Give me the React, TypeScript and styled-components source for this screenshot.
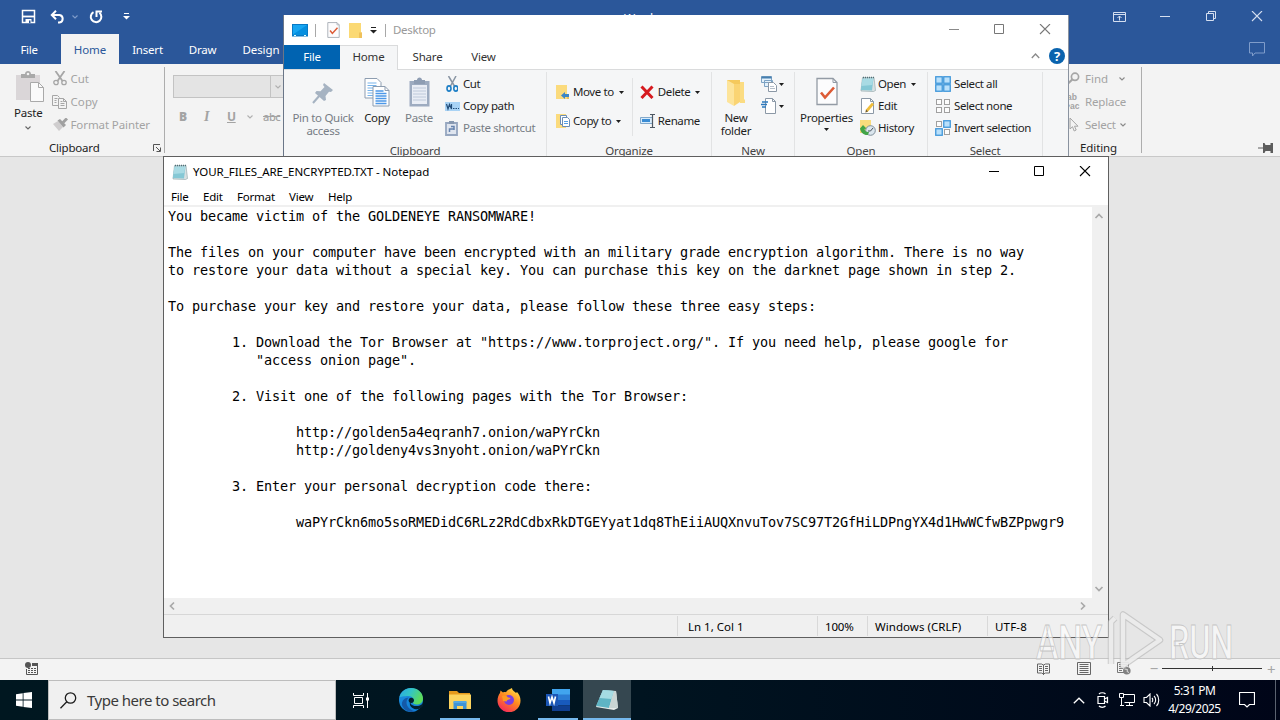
import React from 'react';
import styled, {createGlobalStyle} from 'styled-components';

const GlobalStyle = createGlobalStyle`
  * {
    box-sizing: border-box;
  }

  body {
    margin: 0;
    overflow: hidden;
    font-family: 'Noto Sans', 'Open Sans', sans-serif;
    font-size: 11.5px;
    letter-spacing: -0.4px;
    line-height: 16px;
    color: #1e1e1e;
  }

  svg {
    display: block;
    flex: none;
  }
`;

/* ---------- small glyphs ---------- */

const Caret = ({color = '#1e1e1e'}: {color?: string}) => (
    <svg width="5" height="3" viewBox="0 0 5 3"><path d="M0 0h5L2.5 3z" fill={color}/></svg>
);

const Chevron = ({color = '#8a8a8a', w = 6}: {color?: string; w?: number}) => (
    <svg width={w} height="4" viewBox="0 0 6 4"><path d="M.5.5 3 3 5.5.5" fill="none" stroke={color} strokeWidth="1.1"/></svg>
);

const ScrollArrow = ({turn = 0}: {turn?: number}) => (
    <svg width="10" height="10" viewBox="0 0 10 10">
        <path d="M1.5 7 5 3.5 8.5 7" fill="none" stroke="#a9a9a9" strokeWidth="1.7" transform={`rotate(${turn} 5 5)`}/>
    </svg>
);

const MinIcon = ({color}: {color: string}) => (
    <svg width="12" height="12" viewBox="0 0 12 12"><path d="M1 5.5h10" stroke={color}/></svg>
);
const MaxIcon = ({color}: {color: string}) => (
    <svg width="12" height="12" viewBox="0 0 12 12"><path d="M1.5.5h9v9h-9z" fill="none" stroke={color}/></svg>
);
const CloseIcon = ({color}: {color: string}) => (
    <svg width="12" height="12" viewBox="0 0 12 12"><path d="m1 0 10 10M11 0 1 10" stroke={color} strokeWidth="1.1"/></svg>
);
const RestoreIcon = () => (
    <svg width="12" height="12" viewBox="0 0 12 12">
        <path d="M1.5 2.500h7v7h-7zM3.5 2.500v-2h7v7h-2" fill="none" stroke="#d5dff0"/>
    </svg>
);

/* ---------- word icons ---------- */

const SaveIcon = () => (
    <svg width="15" height="15" viewBox="0 0 15 15">
        <path d="M1.500 1.500h12v12h-12z" fill="none" stroke="#fff" strokeWidth="1.500"/>
        <path d="M2 7.500h11" stroke="#fff" strokeWidth="1.800"/>
        <path d="M4.500 10h6v4h-6z" fill="#fff"/>
        <path d="M8 11.500h1.500V14H8z" fill="#2b579a"/>
    </svg>
);
const UndoIcon = () => (
    <svg width="15" height="14" viewBox="0 0 15 14">
        <path d="M2 5h7.5a3.8 3.8 0 0 1 0 7.500H8M6 .8 1.8 5 6 9.2" fill="none" stroke="#fff" strokeWidth="2"/>
    </svg>
);
const RedoIcon = () => (
    <svg width="14" height="14" viewBox="0 0 14 14">
        <path d="M4.500 2.200a5.300 5.300 0 1 0 6 .6M7.500 7V1.500H13" fill="none" stroke="#fff" strokeWidth="2"/>
    </svg>
);
const CustomizeIcon = ({color = '#fff'}: {color?: string}) => (
    <svg width="7" height="7" viewBox="0 0 7 7"><path d="M1 .5h5" stroke={color}/><path d="M0 3h7L3.5 6.5z" fill={color}/></svg>
);
const RibbonOptionsIcon = () => (
    <svg width="13" height="10" viewBox="0 0 13 10">
        <path d="M.5.5h12v9H.5zM.5 2.5h12M6.5 8.500V4M4.500 6l2-2 2 2" fill="none" stroke="#d5dff0"/>
    </svg>
);
const CommentIcon = () => (
    <svg width="17" height="15" viewBox="0 0 17 15">
        <path d="M.5.5h15v10.500H6l-2.500 3v-3h-3z" fill="none" stroke="#7f9cca"/>
    </svg>
);
const WordPasteIcon = () => (
    <svg width="29" height="31" viewBox="0 0 29 31">
        <path d="M0 4h24v25H0z" fill="#dad6d8"/>
        <path d="M5 3h4c0-4 6-4 6 0h4v4H5z" fill="#a9a9a9"/>
        <circle cx="12" cy="3" r="1.300" fill="#f3f3f3"/>
        <path d="M14.500 11.500h8l5 5v14h-13z" fill="#fafafa" stroke="#a9a9a9"/>
        <path d="M22.500 11.500v5h5" fill="none" stroke="#a9a9a9"/>
    </svg>
);
const WordCutIcon = () => (
    <svg width="16" height="15" viewBox="-2 0 16 15">
        <path d="M2.500 0 9.500 10M11.500 0l-7 10" stroke="#a6a6a6" strokeWidth="1.800"/>
        <circle cx="3" cy="11.500" r="2.200" fill="none" stroke="#a6a6a6" strokeWidth="1.300"/>
        <circle cx="11" cy="11.500" r="2.200" fill="none" stroke="#a6a6a6" strokeWidth="1.300"/>
    </svg>
);
const WordCopyIcon = () => (
    <svg width="17" height="14" viewBox="-1 0 17 14">
        <path d="M6 10.500H.5V.5h5l2 2M2.500 3.500h3M2.500 5.500h2M2.500 7.500h2" fill="none" stroke="#a6a6a6"/>
        <path d="M6.500 3.500h5l3 3v7h-8zM11.500 3.500v3h3M8.500 6.500h2M8.500 8.500h4M8.500 10.500h4" fill="#f3f3f3" stroke="#a6a6a6"/>
    </svg>
);
const PainterIcon = () => (
    <svg width="17" height="14" viewBox="-2 0 17 14">
        <path d="m0 6 5-3 5 6-4 4z" fill="#cfcdce"/>
        <path d="m4.500 2.500 2.500-1.500 6 6-2.500 2.500z" fill="#a0a0a0"/>
        <path d="m10 4.500 4-4" stroke="#a0a0a0" strokeWidth="3"/>
    </svg>
);
const LauncherIcon = () => (
    <svg width="8" height="8" viewBox="0 0 8 8">
        <path d="M.5 7V.5H7M3 3l4 4M7.500 3.500v4h-4" fill="none" stroke="#555"/>
    </svg>
);
const FindIcon = () => (
    <svg width="13" height="13" viewBox="0 0 13 13">
        <circle cx="8" cy="4.800" r="3.600" fill="none" stroke="#a6a6a6" strokeWidth="1.700"/>
        <path d="M5.300 7.500.5 12" stroke="#a6a6a6" strokeWidth="2.200"/>
    </svg>
);
const PointerIcon = () => (
    <svg width="12" height="15" viewBox="-2 0 12 15">
        <path d="M1 1v11l2.500-2.300L5.200 14l2-1-1.700-3.800H9z" fill="none" stroke="#a6a6a6"/>
    </svg>
);
const PinIcon = () => (
    <svg width="16" height="10" viewBox="0 0 16 10">
        <path d="M0 5h5" stroke="#5c5c5c"/>
        <path d="M5 0h1.500l1 2h5V0H15v10h-2.500V8h-5l-1 2H5z" fill="#5c5c5c"/>
    </svg>
);
const MacroIcon = () => (
    <svg width="13" height="13" viewBox="0 0 13 13">
        <path d="M7 1h6v3H7z" fill="#555"/><circle cx="3" cy="3" r="3" fill="#555"/>
        <path d="M3 6.500h8M3 8.500h8M3 10.500h8" stroke="#555"/>
        <path d="M5.500 6v5M8.500 6v5" stroke="#f3f3f3"/>
        <path d="M1.500 7v5.500h11V4" fill="none" stroke="#555"/>
    </svg>
);
const ReadIcon = () => (
    <svg width="13" height="12" viewBox="0 0 13 12">
        <path d="M.5 1h4l2 1 2-1h4v9h-4l-2 1-2-1h-4zM6.500 2v10M2 3.500h3M2 5.500h3M2 7.500h3M8 3.500h3M8 5.500h3M8 7.500h3" fill="none" stroke="#666"/>
    </svg>
);
const PrintViewIcon = () => (
    <svg width="14" height="13" viewBox="0 0 14 13">
        <path d="M.5.5h13v12H.5zM2.500 2.500h9M2.500 4.500h9M2.500 6.500h9M2.500 8.500h9M2.500 10.500h9" fill="none" stroke="#666"/>
    </svg>
);
const WebViewIcon = () => (
    <svg width="14" height="13" viewBox="0 0 14 13">
        <path d="M7 10.500H.5V.5h11v4M2 2.500h8M2 4.500h5M2 6.500h4M2 8.500h3" fill="none" stroke="#777"/>
        <circle cx="9.800" cy="8.800" r="3.800" fill="#808080"/>
        <path d="m7.500 7 3 .5-.5 2 2 1" fill="none" stroke="#ddd"/>
    </svg>
);

/* ---------- explorer icons ---------- */

const DesktopIcon = () => (
    <svg width="16" height="13" viewBox="0 0 16 13">
        <path d="M0 0h16v12.500H0z" fill="#0879c5"/><path d="M1 1h14v9.500H1z" fill="#17a6f2"/>
        <path d="M1 10.500 15 1v9.500z" fill="#058fe0"/><path d="M2 11.500h2M12 11.500h2" stroke="#dff"/>
    </svg>
);
const CheckDocIcon = ({w, h}: {w: number; h: number}) => (
    <svg width={w} height={h} viewBox="0 0 22 28">
        <path d="M1 1h16l4 4v22H1z" fill="#fcfcfd" stroke="#939ba5" strokeWidth="1.300"/>
        <path d="M17 1v4h4" fill="none" stroke="#939ba5"/>
        <path d="m5 15 4 5 9-10" fill="none" stroke="#dd5b36" strokeWidth="2.600"/>
    </svg>
);
const FolderIcon = () => (
    <svg width="13" height="16" viewBox="0 0 13 16">
        <path d="M0 1h12v9l1 1v5H0z" fill="#fbd974"/><path d="M10 10.500h3V16h-3z" fill="#efc15b"/>
    </svg>
);
const BigPinIcon = () => (
    <svg width="22" height="22" viewBox="0 0 22 22">
        <path d="m1 21 7-8" stroke="#a6b3c2" strokeWidth="2"/>
        <path d="m12 1 9 7-2 2-2-.3-3.500 4.300.5 4-2 1L3 11l1.500-2 4 .2L12.500 5 11 3z" fill="#a6b3c2"/>
    </svg>
);
const BigCopyIcon = () => (
    <svg width="26" height="30" viewBox="0 0 26 30">
        <path d="M1 1.500h12l4 4V21H1z" fill="#fff" stroke="#8d9db0"/>
        <path d="M3.500 6h9M3.500 8.500h9M3.500 11h9M3.500 13.500h9M3.500 16h9M3.500 18.500h9" stroke="#77b3ea"/>
        <path d="M9 9.500h12l4 4V29H9z" fill="#fff" stroke="#8d9db0"/>
        <path d="M21 9.500v4h4" fill="none" stroke="#8d9db0"/>
        <path d="M11.500 14h8M11.500 16.500h11M11.500 19h11M11.500 21.500h11M11.500 24h11M11.500 26.500h11" stroke="#4c98e8" strokeWidth="1.400"/>
    </svg>
);
const BigPasteIcon = () => (
    <svg width="21" height="30" viewBox="0 0 21 30">
        <path d="M.5 4h20v25.500H.5z" fill="#9dabc0"/><path d="M3 8h15v19H3z" fill="#e9edf5"/>
        <path d="M5 3h3c0-3.500 5-3.500 5 0h3v4H5z" fill="#8e9db3"/>
        <path d="M4 11h13M4 14h13M4 17h13M4 20h13M4 23h13" stroke="#bec9da"/>
    </svg>
);
const CutIcon = () => (
    <svg width="13" height="16" viewBox="-1 0 13 16">
        <path d="M2.500 0 9 11M10 0 4 11" stroke="#8995a3" strokeWidth="1.500"/>
        <ellipse cx="3" cy="12.500" rx="2" ry="2.600" fill="none" stroke="#1e7fc6" strokeWidth="1.600"/>
        <ellipse cx="9.800" cy="12.500" rx="2" ry="2.600" fill="none" stroke="#1e7fc6" strokeWidth="1.600"/>
    </svg>
);
const PathIcon = () => (
    <svg width="15" height="9" viewBox="0 0 15 9">
        <path d="M0 0h15v9H0z" fill="#a9d3f5"/><path d="m1.500 2 1.500 5L4.500 2.500l2 4.500V2M8 6.500h1.500M10.500 6.500H12M13 6.500h1" fill="none" stroke="#234d79" strokeWidth="1.200"/>
    </svg>
);
const PasteShortcutIcon = () => (
    <svg width="13" height="15" viewBox="0 0 13 15">
        <path d="M1 2h11v12H1z" fill="#dfe5ef" stroke="#96a6bf" strokeWidth="1.800"/><path d="M4 0h5v3H4z" fill="#8798b0"/>
        <path d="M4.500 11V8h4M6 5.500h3V9" fill="none" stroke="#6683ae" strokeWidth="1.500"/>
    </svg>
);
const MoveIcon = () => (
    <svg width="13" height="16" viewBox="0 0 13 16">
        <path d="M0 1h11v9l2 1v4H0z" fill="#fbdb7d"/><path d="M11 10h2v5h-2z" fill="#ecc060"/>
        <path d="M5 11.500 9 8v2h4v3H9v2z" fill="#3d86c6"/>
    </svg>
);
const CopyToIcon = () => (
    <svg width="15" height="16" viewBox="0 0 15 16">
        <path d="M0 1h10v14H0z" fill="#fbdb7d"/>
        <path d="M4.500 2.500h6v9h-6z" fill="#fff" stroke="#6b8db5"/>
        <path d="M6.500 4.500h5l2 2v7h-7z" fill="#fff" stroke="#6b8db5"/><path d="M8 8.500h4M8 10.500h4" stroke="#57a0e4"/>
    </svg>
);
const DeleteIcon = () => (
    <svg width="14" height="14" viewBox="0 0 14 14"><path d="m1.500 1.500 11 11.500M12.500 1.500l-11 11.500" stroke="#d61a1f" strokeWidth="3"/></svg>
);
const RenameIcon = () => (
    <svg width="16" height="14" viewBox="0 0 16 14">
        <path d="M.5 3.500h12v6H.5z" fill="#d9ecfb" stroke="#83a9cb"/><path d="M2 5h8v3H2z" fill="#3a8cd4"/>
        <path d="M10 .5h5M10 13.500h5M12.500.5v13" stroke="#4d5762" strokeWidth="1.200"/>
    </svg>
);
const NewFolderIcon = () => (
    <svg width="20" height="26" viewBox="0 0 20 26">
        <path d="M1 0h13v22H1z" fill="#f5c95c"/><path d="M14 2h4v17l1 1v3h-5z" fill="#fbdc82"/>
        <path d="m1 0 7 4v22l-7-4z" fill="#fde49a"/><path d="M8 4h6v18l-6 4z" fill="#fad473"/>
    </svg>
);
const NewItemIcon = () => (
    <svg width="16" height="16" viewBox="0 0 16 16">
        <path d="M.5.500h10v6H.5zM3.500 4.500h8v6h-8z" fill="#e4f1fb" stroke="#7da3c4"/>
        <path d="M.5 1.500h10" stroke="#477faf" strokeWidth="2"/>
        <path d="M7.500 6.500h5l3 3v6h-8z" fill="#fff" stroke="#8b98a6"/><path d="M9 10.500h4M9 12.500h5" stroke="#b5bfca"/>
    </svg>
);
const EasyAccessIcon = () => (
    <svg width="16" height="16" viewBox="0 0 16 16">
        <path d="M4.500.500h7l3 3v12h-10z" fill="#fff" stroke="#8b98a6"/><path d="M11.500.500v3h3" fill="none" stroke="#8b98a6"/>
        <path d="M1 4h6M0 6.500h6M1 9h4" stroke="#2d79bd" strokeWidth="1.500"/>
    </svg>
);
const NotepadIcon = () => (
    <svg width="16" height="16" viewBox="0 0 16 16">
        <path d="M2.500 1.500h11.500l1.500 13-2 1-12.500-.5z" fill="#d8e1e2" stroke="#8ba1a5" strokeWidth=".6"/>
        <path d="M2.500 2.500h11l-1.500 12L.8 14z" fill="#85c8d5"/><path d="m2.500 3 10.800-.5-1 6.500-11 1z" fill="#a9dbe4"/>
        <path d="M3 1.500h11" stroke="#4f6f77" strokeWidth="1.500" strokeDasharray="1 1"/>
    </svg>
);
const EditIcon = () => (
    <svg width="14" height="16" viewBox="-1 0 14 16">
        <path d="M.5.500h9l3 3v12H.5z" fill="#fff" stroke="#8b98a6"/><path d="M9.500.500v3h3" fill="none" stroke="#8b98a6"/>
        <path d="m5 11.500 6-7 2 2-6 7-2.500 1z" fill="#efbe3c"/><path d="m4.500 14.500.5-3 2 2z" fill="#6c5a3a"/>
    </svg>
);
const HistoryIcon = () => (
    <svg width="16" height="16" viewBox="0 0 16 16">
        <path d="M0 0h11v13H0z" fill="#f9dc7c"/><circle cx="10.500" cy="10.500" r="4.800" fill="#dbe6ee" stroke="#7f8e99"/>
        <path d="M10.500 11 13 8M10.500 11H8" stroke="#47525c"/>
        <path d="M0 8.500C1 13 4 15.500 8 15l1-3c-2.500.5-4-1-4.500-3l2-.5L3 5z" fill="#42a447"/>
    </svg>
);

const SelectIcon = ({on}: {on: boolean[]}) => (
    <svg width="16" height="16" viewBox="0 0 16 16">
        {on.map((active, i) => {
            const x = (i % 2) * 8;
            const y = Math.floor(i / 2) * 8;
            return active
                ? <rect key={i} x={x + 0.75} y={y + 0.75} width="6.500" height="6.500" fill="#b9e0fb" stroke="#3f97da" strokeWidth="1.300"/>
                : <rect key={i} x={x + 1.5} y={y + 1.5} width="5" height="5" fill="#fdfdfd" stroke="#a0a0a0"/>;
        })}
    </svg>
);

/* ---------- taskbar icons ---------- */

const StartIcon = () => (
    <svg width="16" height="16" viewBox="0 0 16 16" fill="#fff">
        <path d="m0 2.200 6.700-1v6.400H0zM7.500 1.100 16 0v7.600H7.500zM0 8.400h6.700v6.400l-6.700-1zM7.500 8.400H16V16l-8.500-1.100z"/>
    </svg>
);
const SearchIcon = () => (
    <svg width="17" height="17" viewBox="0 0 17 17">
        <circle cx="10.500" cy="6" r="5.200" fill="none" stroke="#1c1c1c" strokeWidth="1.300"/>
        <path d="M6.800 9.800.5 16.200" stroke="#1c1c1c" strokeWidth="1.300"/>
    </svg>
);
const TaskViewIcon = () => (
    <svg width="17" height="15" viewBox="0 0 17 15">
        <path d="M.5 0v2.500h10V0M.5 15v-2.500h10V15M1.500 4.500h8v6h-8zM14.500 0v15" fill="none" stroke="#fff"/>
        <path d="M13 4.500h3v3h-3z" fill="#fff"/>
    </svg>
);
const EdgeIcon = () => (
    <svg width="24" height="24" viewBox="0 0 24 24">
        <defs>
            <linearGradient id="edgeTop" x1="0" y1="0" x2="1" y2=".4">
                <stop offset="0" stopColor="#2aa7e6"/><stop offset=".5" stopColor="#33c5c5"/><stop offset="1" stopColor="#5ddc5a"/>
            </linearGradient>
            <linearGradient id="edgeBase" x1="0" y1="0" x2=".5" y2="1">
                <stop offset="0" stopColor="#1f8fe0"/><stop offset="1" stopColor="#1180d8"/>
            </linearGradient>
        </defs>
        <circle cx="12" cy="12" r="12" fill="url(#edgeBase)"/>
        <path d="M.3 9.500C1.500 4 6.300 0 12 0c7 0 12 5 12 10.500 0 4-3 6-6.200 6-3 0-4.300-1.200-3.800-2.200 1.500-2.500 0-6.300-4.500-6.300C5 8 1 9 .3 9.500z" fill="url(#edgeTop)"/>
        <path d="M8.500 11c-3 5 1 11 7.500 12.200C12 25 6 23.500 3.500 18.500 1.500 14 5 9.500 10 9.500c-.8.3-1.200.9-1.500 1.500z" fill="#1459a8"/>
        <path d="M12 13c-1.600 2.500.8 5.200 5.500 5 2.300 0 4.500-1 6.500-2.600v2.600c-1.500 1.800-4.500 3.500-7 3.200-4.500-.4-7.300-4-5.800-7.700z" fill="#03202f"/>
        <circle cx="12.300" cy="12.300" r="2.600" fill="#03202f"/>
    </svg>
);
const ExplorerIcon = () => (
    <svg width="22" height="18" viewBox="0 0 22 18">
        <path d="M0 0h8l2 2h11v5H0z" fill="#e59a1c"/><path d="M0 3.500h22V18H0z" fill="#fcd45e"/>
        <path d="M4.500 18v-7h13v7h-3.500v-3H8v3z" fill="#3f94d6"/><path d="M4.500 10h13v2h-13z" fill="#54a8e2"/>
    </svg>
);
const FirefoxIcon = () => (
    <svg width="24" height="24" viewBox="0 0 24 24">
        <defs>
            <linearGradient id="fox" x1=".8" y1="0" x2=".2" y2="1">
                <stop offset="0" stopColor="#ffe14a"/><stop offset=".45" stopColor="#ff8a1f"/><stop offset="1" stopColor="#f5215f"/>
            </linearGradient>
        </defs>
        <path d="M15 0c0 2.500 3 3.500 4 5l1-1c2 2 3.500 5 3.500 8.500A11.500 11.500 0 0 1 .5 13C.5 9.500 1.500 7 3 5l.5-2.500L6 4.500c1-.5 2-.5 3-.3C10 2 13 1 15 0z" fill="url(#fox)"/>
        <circle cx="12" cy="12" r="5" fill="#7a3fe0"/>
        <path d="M5 8c3-1 5 0 6 1.500 2 0 3 .5 2 1.500-2 1-3 1-3.500 2.500L6 13z" fill="#ff9a22"/>
    </svg>
);
const WordIcon = () => (
    <svg width="24" height="22" viewBox="0 0 24 22">
        <path d="M6 0h18v6H6z" fill="#41a5ee"/><path d="M6 5.500h18V11H6z" fill="#2b7cd3"/>
        <path d="M6 11h18v5.500H6z" fill="#185abd"/><path d="M6 16.500h18V22H6z" fill="#103f91"/>
        <path d="M0 5h12v12H0z" fill="#1b56b5"/>
        <path d="M2.500 7.500 4 14l2-6 2 6 1.500-6.500" fill="none" stroke="#fff" strokeWidth="1.600"/>
    </svg>
);
const TaskNotepadIcon = () => (
    <svg width="24" height="22" viewBox="0 0 24 22">
        <path d="m8 1 13 1 2 17-4 2L1 18z" fill="#e6ecea"/><path d="m8 1 11 1-5 17L1 17z" fill="#5fb4c4"/>
        <path d="m8 1 11 1-2.500 8L4.500 9z" fill="#a5dbe3"/><path d="m19 2 2 0 2 17-9 0z" fill="#c9d5d4"/>
    </svg>
);
const TrayChevron = () => (
    <svg width="12" height="7" viewBox="0 0 12 7"><path d="m.8 6.200 5.200-5 5.200 5" fill="none" stroke="#fff" strokeWidth="1.300"/></svg>
);
const MeetIcon = () => (
    <svg width="12" height="16" viewBox="0 0 12 16">
        <path d="M1 4.500h6.500v7H1zM7.500 7l3-1.500v5l-3-1.500M2 2c1.500-1.700 5-1.700 6.500 0M2 14c1.500 1.700 5 1.700 6.500 0" fill="none" stroke="#fff" strokeWidth="1.200"/>
    </svg>
);
const NetworkIcon = () => (
    <svg width="16" height="14" viewBox="0 0 16 14">
        <path d="M5 1.500h10.500v8H5.500M10.500 9.500v3M7 12.500h7M.5.500h4v4h-4zM2.500 4.500v8M1 12.500h4" fill="none" stroke="#fff"/>
    </svg>
);
const VolumeIcon = () => (
    <svg width="17" height="14" viewBox="0 0 17 14">
        <path d="M1 4.500h2.500L7 1v12L3.500 9.500H1zM9 5c1 1 1 3 0 4M11 3c2.200 2 2.200 6 0 8M13.500 1c3 3.200 3 8.800 0 12" fill="none" stroke="#fff" strokeWidth="1.100"/>
    </svg>
);
const ActionIcon = () => (
    <svg width="16" height="16" viewBox="0 0 16 16"><path d="M.500.500h15v12h-5L8 15l-2.500-2.500h-5z" fill="none" stroke="#fff" strokeWidth="1.200"/></svg>
);

/* ---------- shared pieces ---------- */

const Txt = styled.span<{$ls?: number; $size?: number; $color?: string; $ml?: number; $mt?: number}>`
  flex: none;
  white-space: nowrap;
  margin-left: ${p => p.$ml ?? 0}px;
  ${p => p.$mt && `margin-top: ${p.$mt}px;`}
  ${p => p.$size && `font-size: ${p.$size}px;`}
  ${p => p.$ls !== undefined && `letter-spacing: ${p.$ls}px;`}
  ${p => p.$color && `color: ${p.$color};`}
`;

const Spacer = styled.div`
  flex: 1;
`;

const Controls = styled.div`
  display: flex;
  margin-left: auto;
`;

const Control = styled.div<{$w?: number}>`
  width: ${p => p.$w ?? 45}px;
  height: 30px;
  display: flex;
  align-items: center;
  justify-content: center;
`;

/* ---------- word ---------- */

const Screen = styled.div`
  position: relative;
  width: 1280px;
  height: 720px;
  overflow: hidden;
  display: flex;
  flex-direction: column;
  background: #e6e6e6;
`;

const WordTitle = styled.div`
  height: 33px;
  display: flex;
  align-items: center;
  padding-left: 21px;
  background: #2b579a;
`;

const WordTabs = styled.div`
  height: 31px;
  display: flex;
  padding-top: 1px;
  color: #fff;
  background: #2b579a;
`;

const WordTab = styled.div<{$w: number; $active?: boolean}>`
  width: ${p => p.$w}px;
  display: flex;
  align-items: center;
  justify-content: center;
  padding-top: 1px;
  color: ${p => p.$active ? '#2b579a' : '#fff'};
  background: ${p => p.$active ? '#f3f3f3' : 'transparent'};
`;

const WordRibbon = styled.div`
  height: 93px;
  display: flex;
  padding-top: 3px;
  background: #f3f3f3;
  border-bottom: 1px solid #c8c8c8;
  color: #a3a3a3;
`;

const WordGroup = styled.div<{$w: number; $line?: boolean}>`
  width: ${p => p.$w}px;
  height: 86px;
  display: flex;
  flex-direction: column;
  border-right: ${p => p.$line ? '1px solid #adadad' : 'none'};
`;

const WordGroupBody = styled.div`
  height: 70px;
  display: flex;
`;

const WordGroupLabel = styled.div<{$pl: number}>`
  display: flex;
  align-items: center;
  padding-left: ${p => p.$pl}px;
  padding-top: 4px;
  color: #222;
`;

const PasteColumn = styled.div`
  width: 52px;
  display: flex;
  flex-direction: column;
  align-items: center;
  padding: 4px 0 0 6px;
  color: #222;

  svg:first-child {
    margin-left: 4px;
  }

  span {
    margin-top: 3px;
  }

  svg:last-child {
    margin-top: 5px;
  }
`;

const WordRows = styled.div`
  display: flex;
  flex-direction: column;
`;

const WordRow = styled.div<{$icon?: number}>`
  height: 23px;
  display: grid;
  grid-template-columns: ${p => p.$icon ?? 20}px auto 14px;
  align-items: center;
  justify-content: start;
  white-space: nowrap;
`;

const FontBox = styled.div`
  width: 112px;
  height: 23px;
  margin: 8px 0 0 8px;
  display: flex;
  align-items: center;
  justify-content: flex-end;
  background: #e4e4e4;
  border: 1px solid #c3c3c3;
`;

const FontArrow = styled.div`
  width: 14px;
  height: 21px;
  display: flex;
  align-items: center;
  justify-content: center;
  border-left: 1px solid #c3c3c3;
`;

const FontButtons = styled.div`
  display: flex;
  align-items: center;
  height: 20px;
  margin-top: 9px;
  padding-left: 14px;
  font-size: 12px;
  font-weight: 700;

  i {
    width: 23px;
    font-family: 'Liberation Serif', serif;
    font-size: 14px;
  }

  b {
    width: 25px;
  }

  u {
    width: 20px;
  }

  s {
    margin-left: 10px;
    font-weight: 500;
    font-size: 11px;
  }
`;

const ReplaceGlyph = styled.div`
  display: grid;
  grid-template-rows: 9px 9px;
  font-family: 'Liberation Sans', sans-serif;
  font-size: 8.5px;
  font-weight: 700;
  letter-spacing: 0;
  line-height: 9px;
`;

const WordStatus = styled.div`
  height: 22px;
  display: flex;
  align-items: center;
  padding: 0 4px 2px 25px;
  background: #f3f3f3;
  border-top: 1px solid #c6c6c6;
`;

const ZoomTrack = styled.div`
  width: 100px;
  height: 1px;
  margin: 0 4px 0 4px;
  display: flex;
  align-items: center;
  justify-content: center;
  background: #333;

  &::after {
    content: '';
    width: 1px;
    height: 5px;
    background: #333;
  }
`;

const ZoomSign = styled.span`
  width: 10px;
  color: #a6a6a6;
  font-size: 15px;
  text-align: center;
`;

/* ---------- explorer ---------- */

const ExplorerWindow = styled.div`
  position: absolute;
  left: 284px;
  top: 15px;
  width: 784px;
  height: 142px;
  overflow: hidden;
  background: #fff;
  box-shadow: -1px 0 0 #6a7688, 1px 0 0 #8a93a0;
`;

const ExplorerTitle = styled.div`
  height: 30px;
  display: flex;
  align-items: center;
  padding-left: 8px;
  color: #999;
`;

const TitleLine = styled.div<{$ml: number}>`
  width: 1px;
  height: 13px;
  margin-left: ${p => p.$ml}px;
  background: #a8a8a8;
`;

const ExplorerTabs = styled.div`
  height: 24px;
  display: flex;
  align-items: flex-start;
`;

const ExplorerTab = styled.div<{$w: number; $kind?: 'file' | 'active'}>`
  width: ${p => p.$w}px;
  height: ${p => p.$kind === 'active' ? 25 : 24}px;
  flex: none;
  padding-top: ${p => p.$kind === 'active' ? 3 : 4}px;
  text-align: center;
  letter-spacing: -0.2px;
  color: ${p => p.$kind === 'file' ? '#fff' : '#333'};
  background: ${p => p.$kind === 'file' ? '#0063b1' : p.$kind === 'active' ? '#f5f6f7' : 'transparent'};
  border: ${p => p.$kind === 'active' ? '1px solid #dadbdc' : 'none'};
  border-bottom: none;
  border-left: none;
`;

const TabTools = styled.div`
  height: 22px;
  display: flex;
  align-items: center;
`;

const HelpBadge = styled.div`
  width: 16px;
  height: 16px;
  margin: 0 3px 0 9px;
  border-radius: 50%;
  background: #0a63ae;
  color: #fff;
  font-size: 13px;
  font-weight: 700;
  text-align: center;
`;

const ExplorerRibbon = styled.div`
  height: 88px;
  display: flex;
  background: #f5f6f7;
  border-top: 1px solid #dadbdc;
`;

const ExplorerGroup = styled.div<{$w: number}>`
  width: ${p => p.$w}px;
  margin-top: 2px;
  display: flex;
  flex-direction: column;
  border-right: 1px solid #e2e3e4;
`;

const GroupBody = styled.div`
  height: 70px;
  flex: none;
  display: flex;
`;

const GroupLabel = styled.div`
  padding-top: 1px;
  text-align: center;
  letter-spacing: -0.2px;
  color: #444;
`;

const BigButton = styled.div<{$w: number; $pt: number; $gap?: number; $dim?: boolean}>`
  width: ${p => p.$w}px;
  flex: none;
  display: flex;
  flex-direction: column;
  align-items: center;
  padding-top: ${p => p.$pt}px;
  line-height: 13px;
  letter-spacing: -0.3px;
  text-align: center;
  color: ${p => p.$dim ? '#777d85' : '#1e1e1e'};

  span {
    margin-top: ${p => p.$gap ?? 4}px;
  }

  span + svg {
    margin-top: 4px;
  }
`;

const ToolColumn = styled.div<{$ml: number; $pt?: number; $gap?: number}>`
  flex: none;
  display: flex;
  flex-direction: column;
  gap: ${p => p.$gap ?? 0}px;
  margin-left: ${p => p.$ml}px;
  padding-top: ${p => p.$pt ?? 1}px;
`;

const Tool = styled.div<{$icon?: number; $dim?: boolean}>`
  height: 22px;
  display: grid;
  grid-template-columns: ${p => p.$icon ?? 18}px auto auto;
  align-items: center;
  justify-content: start;
  white-space: nowrap;
  color: ${p => p.$dim ? '#777d85' : '#1e1e1e'};

  svg:last-child:not(:first-child) {
    margin-left: 5px;
  }
`;

const InnerLine = styled.div`
  width: 1px;
  height: 58px;
  margin: 6px 0 0 8px;
  background: #e2e3e4;
`;

/* ---------- notepad ---------- */

const NotepadWindow = styled.div`
  position: absolute;
  left: 163px;
  top: 156px;
  width: 946px;
  height: 482px;
  display: flex;
  flex-direction: column;
  background: #fff;
  border: 1px solid #5f5f5f;
  color: #000;
`;

const NotepadTitle = styled.div`
  height: 30px;
  display: flex;
  align-items: center;
  gap: 5px;
  padding: 0 0 1px 8px;
`;

const NotepadMenu = styled.div`
  height: 20px;
  display: flex;
  align-items: center;
  padding: 2px 0 0 7px;
  border-bottom: 2px solid #f0f0f0;
  letter-spacing: -0.2px;
`;

const MenuItem = styled.span<{$w: number}>`
  width: ${p => p.$w}px;
`;

const Editor = styled.div`
  height: 391px;
  display: flex;
`;

const NoteText = styled.pre`
  flex: 1;
  margin: 0;
  padding: 0 0 0 4px;
  font-family: 'DejaVu Sans Mono', monospace;
  font-size: 13.5px;
  letter-spacing: -0.127px;
  line-height: 18px;
`;

const ScrollBar = styled.div<{$row?: boolean}>`
  display: flex;
  flex-direction: ${p => p.$row ? 'row' : 'column'};
  align-items: center;
  justify-content: space-between;
  background: #f0f0f0;
  ${p => p.$row
    ? 'height: 16px; padding: 0 20px 1px 3px;'
    : 'width: 16px; padding: 4px 2px 4px 0;'}
`;

const NotepadStatus = styled.div`
  height: 23px;
  display: flex;
  align-items: center;
  justify-content: flex-end;
  background: #f0f0f0;
  border-top: 1px solid #d7d7d7;
`;

const StatusCell = styled.div<{$w: number; $pl: number}>`
  width: ${p => p.$w}px;
  height: 20px;
  padding: 3px 0 0 ${p => p.$pl}px;
  border-left: 1px solid #d9d9d9;
  letter-spacing: -0.2px;
`;

/* ---------- taskbar ---------- */

const Taskbar = styled.div`
  height: 40px;
  display: flex;
  align-items: center;
  color: #fff;
  background: linear-gradient(90deg, #001720 0%, #001420 50%, #000518 100%);
`;

const StartButton = styled.div`
  width: 48px;
  display: flex;
  justify-content: center;
`;

const SearchBox = styled.div`
  width: 288px;
  height: 40px;
  display: flex;
  align-items: center;
  gap: 10px;
  padding-left: 11px;
  background: #f0f0f0;
  border: 1px solid #bdbdbd;
  color: #3a3a3a;
`;

const TaskButton = styled.div<{$w?: number; $line?: number; $active?: boolean}>`
  width: ${p => p.$w ?? 49}px;
  height: 40px;
  display: flex;
  align-items: center;
  justify-content: center;
  background: linear-gradient(#76b9ed, #76b9ed) center bottom / ${p => p.$line ?? 0}px 2px no-repeat;
  background-color: ${p => p.$active ? '#354750' : 'transparent'};
`;

const Tray = styled.div`
  margin-left: auto;
  display: flex;
  align-items: center;
`;

const TrayItem = styled.div<{$w?: number}>`
  width: ${p => p.$w ?? 24}px;
  display: flex;
  justify-content: center;
`;

const Clock = styled.div`
  width: 63px;
  text-align: center;
  font-size: 12px;
  line-height: 18px;
  letter-spacing: -0.5px;
`;

const PeekLine = styled.div`
  width: 1px;
  height: 40px;
  margin: 0 4px 0 7px;
  background: #5b6270;
`;

const Watermark = styled.svg`
  position: absolute;
  left: 1030px;
  top: 604px;
  overflow: visible;
`;

const note = `You became victim of the GOLDENEYE RANSOMWARE!

The files on your computer have been encrypted with an military grade encryption algorithm. There is no way
to restore your data without a special key. You can purchase this key on the darknet page shown in step 2.

To purchase your key and restore your data, please follow these three easy steps:

        1. Download the Tor Browser at "https://www.torproject.org/". If you need help, please google for
           "access onion page".

        2. Visit one of the following pages with the Tor Browser:

                http://golden5a4eqranh7.onion/waPYrCkn
                http://goldeny4vs3nyoht.onion/waPYrCkn

        3. Enter your personal decryption code there:

                waPYrCkn6mo5soRMEDidC6RLz2RdCdbxRkDTGEYyat1dq8ThEiiAUQXnvuTov7SC97T2GfHiLDPngYX4d1HwWCfwBZPpwgr9`;

const Word = () => (
    <>
        <WordTitle>
            <SaveIcon/>
            <Txt $ml={14}><UndoIcon/></Txt>
            <Txt $ml={7}><Chevron color="#7f9cca"/></Txt>
            <Txt $ml={11}><RedoIcon/></Txt>
            <Txt $ml={20}><CustomizeIcon/></Txt>
            <Txt $ml={494} $mt={5} $size={12} $color="#fff">Word</Txt>
            <Controls>
                <Control $w={46}><RibbonOptionsIcon/></Control>
                <Control $w={46}><MinIcon color="#d5dff0"/></Control>
                <Control $w={46}><RestoreIcon/></Control>
                <Control $w={46}><CloseIcon color="#d5dff0"/></Control>
            </Controls>
        </WordTitle>
        <WordTabs>
            <WordTab $w={61}><Txt $ls={-0.3} $ml={-3}>File</Txt></WordTab>
            <WordTab $w={58} $active><Txt $ls={0}>Home</Txt></WordTab>
            <WordTab $w={57}><Txt $ls={-0.2}>Insert</Txt></WordTab>
            <WordTab $w={53}><Txt $ls={-0.2}>Draw</Txt></WordTab>
            <WordTab $w={64}><Txt $ls={-0.1}>Design</Txt></WordTab>
            <Spacer/>
            <Control $w={46}><CommentIcon/></Control>
        </WordTabs>
        <WordRibbon>
            <WordGroup $w={165} $line>
                <WordGroupBody>
                    <PasteColumn>
                        <WordPasteIcon/>
                        <Txt $ls={-0.2}>Paste</Txt>
                        <Chevron color="#666"/>
                    </PasteColumn>
                    <WordRows>
                        <WordRow><WordCutIcon/><Txt $ls={0}>Cut</Txt></WordRow>
                        <WordRow><WordCopyIcon/><Txt $ls={0.1}>Copy</Txt></WordRow>
                        <WordRow><PainterIcon/><Txt $ls={-0.1}>Format Painter</Txt></WordRow>
                    </WordRows>
                </WordGroupBody>
                <WordGroupLabel $pl={49}>
                    <Txt $ls={-0.2}>Clipboard</Txt>
                    <Txt $ml={53}><LauncherIcon/></Txt>
                </WordGroupLabel>
            </WordGroup>
            <WordGroup $w={120}>
                <FontBox><FontArrow><Chevron color="#b0b0b0"/></FontArrow></FontBox>
                <FontButtons>
                    <b>B</b><i>I</i><u>U</u><Chevron color="#b0b0b0"/><s>abc</s>
                </FontButtons>
            </WordGroup>
            <Spacer/>
            <WordGroup $w={75} $line>
                <WordGroupBody>
                    <WordRows>
                        <WordRow $icon={18}><FindIcon/><Txt $ls={0}>Find</Txt><Txt $ml={11}><Chevron/></Txt></WordRow>
                        <WordRow $icon={18}><ReplaceGlyph><span>ab</span><span>•ac</span></ReplaceGlyph><Txt $ls={-0.15}>Replace</Txt></WordRow>
                        <WordRow $icon={18}><PointerIcon/><Txt $ls={-0.2}>Select</Txt><Txt $ml={4}><Chevron/></Txt></WordRow>
                    </WordRows>
                </WordGroupBody>
                <WordGroupLabel $pl={13}><Txt $ls={-0.1}>Editing</Txt></WordGroupLabel>
            </WordGroup>
            <WordGroup $w={138}>
                <WordGroupBody/>
                <WordGroupLabel $pl={116}><Txt $mt={4}><PinIcon/></Txt></WordGroupLabel>
            </WordGroup>
        </WordRibbon>
        <Spacer/>
        <WordStatus>
            <MacroIcon/>
            <Spacer/>
            <ReadIcon/>
            <Txt $ml={27}><PrintViewIcon/></Txt>
            <Txt $ml={26}><WebViewIcon/></Txt>
            <Txt $ml={19}><ZoomSign>−</ZoomSign></Txt>
            <ZoomTrack/>
            <ZoomSign>+</ZoomSign>
        </WordStatus>
    </>
);

const Explorer = () => (
    <ExplorerWindow>
        <ExplorerTitle>
            <DesktopIcon/>
            <TitleLine $ml={7}/>
            <Txt $ml={11}><CheckDocIcon w={13} h={16}/></Txt>
            <Txt $ml={9}><FolderIcon/></Txt>
            <Txt $ml={8}><CustomizeIcon color="#222"/></Txt>
            <TitleLine $ml={8}/>
            <Txt $ml={7} $ls={-0.3}>Desktop</Txt>
            <Controls>
                <Control><MinIcon color="#8a8a8a"/></Control>
                <Control><MaxIcon color="#777"/></Control>
                <Control $w={47}><CloseIcon color="#777"/></Control>
            </Controls>
        </ExplorerTitle>
        <ExplorerTabs>
            <ExplorerTab $w={56} $kind="file">File</ExplorerTab>
            <ExplorerTab $w={58} $kind="active">Home</ExplorerTab>
            <ExplorerTab $w={59}>Share</ExplorerTab>
            <ExplorerTab $w={53}>View</ExplorerTab>
            <Spacer/>
            <TabTools>
                <svg width="9" height="6" viewBox="0 0 9 6"><path d="m.8 5 3.700-4 3.700 4" fill="none" stroke="#8a8a8a" strokeWidth="1.300"/></svg>
                <HelpBadge>?</HelpBadge>
            </TabTools>
        </ExplorerTabs>
        <ExplorerRibbon>
            <ExplorerGroup $w={263}>
                <GroupBody>
                    <BigButton $w={78} $pt={10} $gap={7} $dim><BigPinIcon/><span>Pin to Quick<br/>access</span></BigButton>
                    <BigButton $w={30} $pt={5}><BigCopyIcon/><span>Copy</span></BigButton>
                    <BigButton $w={54} $pt={5} $dim><BigPasteIcon/><span>Paste</span></BigButton>
                    <ToolColumn $ml={-1}>
                        <Tool><CutIcon/>Cut</Tool>
                        <Tool><PathIcon/>Copy path</Tool>
                        <Tool $dim><PasteShortcutIcon/>Paste shortcut</Tool>
                    </ToolColumn>
                </GroupBody>
                <GroupLabel>Clipboard</GroupLabel>
            </ExplorerGroup>
            <ExplorerGroup $w={165}>
                <GroupBody>
                    <ToolColumn $ml={9} $pt={9} $gap={7}>
                        <Tool $icon={17}><MoveIcon/>Move to<Caret/></Tool>
                        <Tool $icon={17}><CopyToIcon/>Copy to<Caret/></Tool>
                    </ToolColumn>
                    <InnerLine/>
                    <ToolColumn $ml={7} $pt={9} $gap={7}>
                        <Tool><DeleteIcon/>Delete<Caret/></Tool>
                        <Tool><RenameIcon/>Rename</Tool>
                    </ToolColumn>
                </GroupBody>
                <GroupLabel>Organize</GroupLabel>
            </ExplorerGroup>
            <ExplorerGroup $w={83}>
                <GroupBody>
                    <BigButton $w={48} $pt={8} $gap={5}><NewFolderIcon/><span>New<br/>folder</span></BigButton>
                    <ToolColumn $ml={1}>
                        <Tool $icon={13}><NewItemIcon/><Caret/></Tool>
                        <Tool $icon={13}><EasyAccessIcon/><Caret/></Tool>
                    </ToolColumn>
                </GroupBody>
                <GroupLabel>New</GroupLabel>
            </ExplorerGroup>
            <ExplorerGroup $w={133}>
                <GroupBody>
                    <BigButton $w={63} $pt={5} $gap={5}>
                        <CheckDocIcon w={22} h={29}/>
                        <span>Properties</span>
                        <Caret/>
                    </BigButton>
                    <ToolColumn $ml={2}>
                        <Tool><NotepadIcon/>Open<Caret/></Tool>
                        <Tool><EditIcon/>Edit</Tool>
                        <Tool><HistoryIcon/>History</Tool>
                    </ToolColumn>
                </GroupBody>
                <GroupLabel>Open</GroupLabel>
            </ExplorerGroup>
            <ExplorerGroup $w={115}>
                <GroupBody>
                    <ToolColumn $ml={7}>
                        <Tool $icon={19}><SelectIcon on={[true, true, true, true]}/>Select all</Tool>
                        <Tool $icon={19}><SelectIcon on={[false, false, false, false]}/>Select none</Tool>
                        <Tool $icon={19}><SelectIcon on={[false, true, true, false]}/>Invert selection</Tool>
                    </ToolColumn>
                </GroupBody>
                <GroupLabel>Select</GroupLabel>
            </ExplorerGroup>
        </ExplorerRibbon>
    </ExplorerWindow>
);

const Notepad = () => (
    <NotepadWindow>
        <NotepadTitle>
            <NotepadIcon/>
            <Txt $ls={-0.04}>YOUR_FILES_ARE_ENCRYPTED.TXT - Notepad</Txt>
            <Controls>
                <Control><MinIcon color="#000"/></Control>
                <Control><MaxIcon color="#000"/></Control>
                <Control $w={47}><CloseIcon color="#000"/></Control>
            </Controls>
        </NotepadTitle>
        <NotepadMenu>
            <MenuItem $w={32}>File</MenuItem>
            <MenuItem $w={34}>Edit</MenuItem>
            <MenuItem $w={52}>Format</MenuItem>
            <MenuItem $w={39}>View</MenuItem>
            <MenuItem $w={30}>Help</MenuItem>
        </NotepadMenu>
        <Editor>
            <NoteText>{note}</NoteText>
            <ScrollBar>
                <ScrollArrow/>
                <ScrollArrow turn={180}/>
            </ScrollBar>
        </Editor>
        <ScrollBar $row>
            <ScrollArrow turn={-90}/>
            <ScrollArrow turn={90}/>
        </ScrollBar>
        <NotepadStatus>
            <StatusCell $w={140} $pl={10}><Txt $ls={0}>Ln 1, Col 1</Txt></StatusCell>
            <StatusCell $w={50} $pl={7}>100%</StatusCell>
            <StatusCell $w={120} $pl={7}><Txt $ls={0.05}>Windows (CRLF)</Txt></StatusCell>
            <StatusCell $w={121} $pl={7}><Txt $ls={0.2}>UTF-8</Txt></StatusCell>
        </NotepadStatus>
    </NotepadWindow>
);

const App = () => (
    <Screen>
        <GlobalStyle/>
        <Word/>
        <Taskbar>
            <StartButton><StartIcon/></StartButton>
            <SearchBox>
                <SearchIcon/>
                <Txt $size={15} $ls={-0.5}>Type here to search</Txt>
            </SearchBox>
            <TaskButton $w={50}><TaskViewIcon/></TaskButton>
            <TaskButton $w={50}><EdgeIcon/></TaskButton>
            <TaskButton $w={48} $line={40}><ExplorerIcon/></TaskButton>
            <TaskButton $w={50}><FirefoxIcon/></TaskButton>
            <TaskButton $w={48} $line={40}><WordIcon/></TaskButton>
            <TaskButton $w={1}/>
            <TaskButton $w={48} $line={48} $active><TaskNotepadIcon/></TaskButton>
            <Tray>
                <TrayItem><TrayChevron/></TrayItem>
                <TrayItem><MeetIcon/></TrayItem>
                <TrayItem><NetworkIcon/></TrayItem>
                <TrayItem><VolumeIcon/></TrayItem>
                <Clock>5:31 PM<br/>4/29/2025</Clock>
                <TrayItem $w={42}><ActionIcon/></TrayItem>
                <PeekLine/>
            </Tray>
        </Taskbar>
        <Explorer/>
        <Notepad/>
        <Watermark width="250" height="90" viewBox="0 0 250 90">
            <g fill="#fff" fillOpacity=".65" stroke="#bdbdbd" strokeOpacity=".85" strokeWidth=".9" fontFamily="Roboto, sans-serif" fontSize="49" fontWeight="500">
                <text x="6" y="54.500" textLength="66" lengthAdjust="spacingAndGlyphs">ANY</text>
                <text x="139" y="54.500" textLength="64" lengthAdjust="spacingAndGlyphs">RUN</text>
            </g>
            <g fill="none" strokeLinejoin="round">
                <path d="M93 10.500v51l37-25.500zM85 14l-4 4v42" stroke="#b4b4b4" strokeOpacity=".6" strokeWidth="6.500"/>
                <path d="M93 10.500v51l37-25.500zM85 14l-4 4v42" stroke="#f1f1f1" strokeOpacity=".85" strokeWidth="4.500"/>
            </g>
        </Watermark>
    </Screen>
);

export default App;
